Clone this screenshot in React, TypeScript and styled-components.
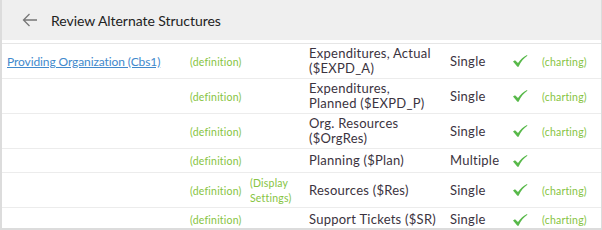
import styled, { createGlobalStyle } from "styled-components";

const GlobalStyle = createGlobalStyle`
  html, body {
    margin: 0;
    padding: 0;
    background: #ffffff;
  }
  body {
    font-family: Lato, "Noto Sans", Arial, sans-serif;
  }
`;

const Frame = styled.div`
  width: 602px;
  height: 230px;
  box-sizing: border-box;
  border-left: 2px solid #dcdcdc;
  border-right: 1px solid #dcdcdc;
  border-bottom: 2px solid #dcdcdc;
  overflow: hidden;
  background: #ffffff;
`;

const Header = styled.header`
  display: flex;
  align-items: center;
  gap: 13px;
  height: 40px;
  padding-left: 20px;
  background: #efefef;
`;

const BackButton = styled.button`
  display: flex;
  align-items: center;
  justify-content: center;
  padding: 0;
  border: 0;
  background: transparent;
  color: #777777;
  cursor: pointer;
`;

const Title = styled.h1`
  margin: 0;
  font-size: 14px;
  font-weight: 400;
  letter-spacing: -0.05px;
  color: #222222;
`;

const Spacer = styled.div`
  height: 3px;
  border-bottom: 1px solid #e6e6e6;
`;

const Table = styled.table`
  width: 100%;
  border-collapse: collapse;
  table-layout: fixed;
`;

const Row = styled.tr`
  border-bottom: 1px solid #ececec;
  &:last-child {
    border-bottom: 0;
  }
`;

const Cell = styled.td<{ $w?: number; $first?: boolean }>`
  box-sizing: border-box;
  width: ${(p) => (p.$w ? `${p.$w}px` : "auto")};
  padding: 2px 7px 2px ${(p) => (p.$first ? "5px" : "7px")};
  vertical-align: middle;
  font-size: 13px;
  letter-spacing: 0.25px;
  line-height: 15px;
  color: #3b3340;
`;

const OrgLink = styled.a`
  color: #4189cc;
  font-size: 12px;
  letter-spacing: -0.1px;
  text-decoration: underline;
  white-space: nowrap;
`;

const Hint = styled.span`
  color: #86c442;
  font-size: 10.5px;
  letter-spacing: 0.2px;
  line-height: 14px;
`;

const CheckWrap = styled.span`
  display: flex;
  align-items: center;
  height: 19px;
`;

const Check = () => (
  <CheckWrap>
    <svg width="17" height="14" viewBox="0 0 16 14">
      <path
        d="M1 7.5 L3 6.2 L6 9 C8.5 5.5 11.5 2.8 15 1 L15.4 1.8 C12 4 9 7.5 6.6 12.8 L5.4 12.8 Z"
        fill="#58b94a"
      />
    </svg>
  </CheckWrap>
);

const ArrowLeft = () => (
  <svg width="16" height="14" viewBox="0 0 16 14" fill="none" stroke="#777777" strokeWidth="1.3">
    <path d="M15 7 H1.5 M7.5 1 L1.5 7 L7.5 13" />
  </svg>
);

type Item = {
  org?: string;
  display?: boolean;
  name: string;
  type: string;
  charting: boolean;
};

const items: Item[] = [
  { org: "Providing Organization (Cbs1)", name: "Expenditures, Actual ($EXPD_A)", type: "Single", charting: true },
  { name: "Expenditures, Planned ($EXPD_P)", type: "Single", charting: true },
  { name: "Org. Resources ($OrgRes)", type: "Single", charting: true },
  { name: "Planning ($Plan)", type: "Multiple", charting: false },
  { name: "Resources ($Res)", display: true, type: "Single", charting: true },
  { name: "Support Tickets ($SR)", type: "Single", charting: true },
];

export default function App() {
  return (
    <>
      <GlobalStyle />
      <Frame>
        <Header>
          <BackButton aria-label="Back">
            <ArrowLeft />
          </BackButton>
          <Title>Review Alternate Structures</Title>
        </Header>
        <Spacer />
        <Table>
          <tbody>
            {items.map((it, i) => (
              <Row key={i}>
                <Cell $w={181} $first>
                  {it.org && <OrgLink href="#">{it.org}</OrgLink>}
                </Cell>
                <Cell $w={60}>
                  <Hint>(definition)</Hint>
                </Cell>
                <Cell $w={59}>{it.display && <Hint>(Display Settings)</Hint>}</Cell>
                <Cell $w={141}>{it.name}</Cell>
                <Cell $w={62}>{it.type}</Cell>
                <Cell $w={30}>
                  <Check />
                </Cell>
                <Cell>{it.charting && <Hint>(charting)</Hint>}</Cell>
              </Row>
            ))}
          </tbody>
        </Table>
      </Frame>
    </>
  );
}
